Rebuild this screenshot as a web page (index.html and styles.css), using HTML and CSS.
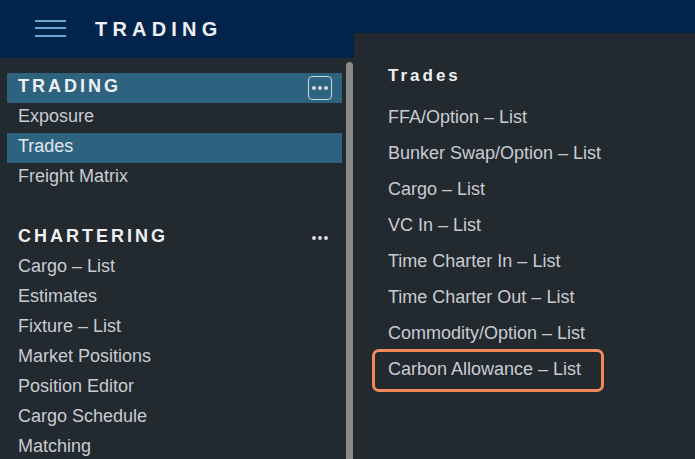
FILE: index.html
```html
<!DOCTYPE html>
<html lang="en">
<head>
  <meta charset="UTF-8">
  <meta name="viewport" content="width=device-width, initial-scale=1.0">
  <title>Trading</title>
  <link rel="stylesheet" href="styles.css">
</head>
<body>
  <header class="topbar">
    <button class="burger" aria-label="Menu">
      <span></span><span></span><span></span>
    </button>
    <h1 class="app-title">TRADING</h1>
  </header>

  <div class="main">
    <nav class="sidebar">
      <div class="nav-list">
        <div class="section-head active">
          <span>TRADING</span>
          <button class="more boxed" aria-label="More">
            <svg width="16" height="4" viewBox="0 0 16 4"><circle cx="2" cy="2" r="2"/><circle cx="8" cy="2" r="2"/><circle cx="14" cy="2" r="2"/></svg>
          </button>
        </div>
        <div class="nav-item">Exposure</div>
        <div class="nav-item selected">Trades</div>
        <div class="nav-item">Freight Matrix</div>

        <div class="section-head spaced">
          <span>CHARTERING</span>
          <button class="more" aria-label="More">
            <svg width="16" height="4" viewBox="0 0 16 4"><circle cx="2" cy="2" r="2"/><circle cx="8" cy="2" r="2"/><circle cx="14" cy="2" r="2"/></svg>
          </button>
        </div>
        <div class="nav-item">Cargo &ndash; List</div>
        <div class="nav-item">Estimates</div>
        <div class="nav-item">Fixture &ndash; List</div>
        <div class="nav-item">Market Positions</div>
        <div class="nav-item">Position Editor</div>
        <div class="nav-item">Cargo Schedule</div>
        <div class="nav-item">Matching</div>
      </div>
      <div class="scrollbar"></div>
    </nav>
  </div>

  <!-- flyout for the selected item -->
  <div class="flyout">
    <h2>Trades</h2>
    <ul>
      <li>FFA/Option &ndash; List</li>
      <li>Bunker Swap/Option &ndash; List</li>
      <li>Cargo &ndash; List</li>
      <li>VC In &ndash; List</li>
      <li>Time Charter In &ndash; List</li>
      <li>Time Charter Out &ndash; List</li>
      <li>Commodity/Option &ndash; List</li>
      <li class="marked">Carbon Allowance &ndash; List</li>
    </ul>
  </div>
</body>
</html>
```

FILE: styles.css
```css
body {
  margin: 0;
  height: 459px;
  overflow: hidden;
  background-color: #22292f;
  font-family: "Liberation Sans", Arial, sans-serif;
  color: #c9ccd2;
}
.topbar {
  height: 58px;
  background-color: #02244a;
  display: flex;
  align-items: center;
}
.burger {
  width: 31px;
  height: 17px;
  margin: 0 0 2px 35px;
  padding: 0;
  border: none;
  background: none;
  display: flex;
  flex-direction: column;
  justify-content: space-between;
}
.burger span {
  display: block;
  height: 2px;
  width: 31px;
  background-color: #6ba6d2;
}
.app-title {
  margin: 0 0 0 29px;
  font-size: 20px;
  font-weight: bold;
  letter-spacing: 5.2px;
  color: #eef0f4;
}
.main {
  display: flex;
}
.sidebar {
  width: 354px;
  display: flex;
}
.nav-list {
  width: 335px;
  margin: 15px 0 0 7px;
}
.scrollbar {
  width: 7px;
  margin: 4px 0 0 4px;
  height: 397px;
  background-color: #8a8a8a;
  border-radius: 4px 4px 0 0;
}
.section-head {
  height: 26px;
  padding: 0 10px 4px 11px;
  display: flex;
  align-items: center;
  justify-content: space-between;
  font-size: 18px;
  font-weight: bold;
  letter-spacing: 3px;
  color: #eef0f4;
}
.section-head.active {
  background-color: #2e6380;
}
.section-head.spaced {
  margin-top: 30px;
}
.more {
  width: 24px;
  height: 24px;
  margin-top: 4px;
  padding: 0;
  border: 1px solid transparent;
  border-radius: 4px;
  background: none;
  display: flex;
  align-items: center;
  justify-content: center;
  fill: #d8dde3;
}
.more.boxed {
  border-color: #d0d6dd;
}
.nav-item {
  height: 26px;
  line-height: 26px;
  padding: 0 0 4px 11px;
  font-size: 18px;
}
.nav-item.selected {
  background-color: #2e6380;
  color: #e4e8ee;
}
.flyout {
  position: absolute;
  top: 33px;
  left: 354px;
  right: 0;
  bottom: 0;
  background-color: #22292f;
  padding: 0 0 0 34px;
}
.flyout h2 {
  margin: 0;
  height: 66px;
  line-height: 86px;
  font-size: 17px;
  letter-spacing: 3px;
  color: #eef0f4;
}
.flyout ul {
  list-style: none;
  margin: 0;
  padding: 0;
}
.flyout li {
  height: 36px;
  line-height: 36px;
  font-size: 18px;
  width: fit-content;
  position: relative;
}
.flyout li.marked::after {
  content: "";
  position: absolute;
  top: -2px;
  bottom: -5px;
  left: -16px;
  right: -23px;
  border: 3px solid #f2885e;
  border-radius: 7px;
}
```
